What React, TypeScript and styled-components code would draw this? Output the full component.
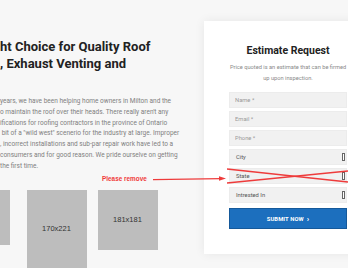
import styled, { createGlobalStyle } from "styled-components";

const GlobalStyle = createGlobalStyle`
  html, body {
    margin: 0;
    padding: 0;
    background: #f7f7f7;
    overflow: hidden;
  }
  body {
    font-family: Roboto, "Liberation Sans", Arial, sans-serif;
  }
`;

const fields = ["Name *", "Email *", "Phone *"];
const selects = ["City", "State", "Intrested In"];

const images = [
  { w: 48, h: 55, label: "" },
  { w: 60, h: 78, label: "170x221" },
  { w: 60, h: 60, label: "181x181" },
];

export default function App() {
  return (
    <>
      <GlobalStyle />
      <Page>
        <Row>
          <Intro>
            <Heading>
              ht Choice for Quality Roof
              <br />, Exhaust Venting and
            </Heading>

            <Body>
              years, we have been helping home owners in Milton and the
              <br />o maintain the roof over their heads. There really aren't any
              <br />ifications for roofing contractors in the province of Ontario
              <br />
              {"\u00a0"}bit of a "wild west" scenerio for the industry at large. Improper
              <br />, incorrect installations and sub-par repair work have led to a
              <br />
              consumers and for good reason. We pride ourselve on getting
              <br />
              the first time.
            </Body>

            <Gallery>
              {images.map((img, i) => (
                <Placeholder key={i} $w={img.w} $h={img.h}>
                  {img.label}
                </Placeholder>
              ))}
            </Gallery>
          </Intro>

          <Card>
            <CardTitle>Estimate Request</CardTitle>
            <CardText>
              Price quoted is an estimate that can be firmed
              <br />
              up upon inspection.
            </CardText>

            <Form>
              {fields.map((f) => (
                <Input key={f} placeholder={f} />
              ))}
              {selects.map((s) => (
                <Select key={s}>
                  <span>{s}</span>
                  <Spinner />
                </Select>
              ))}
              <Submit type="button">
                SUBMIT NOW <Chevron>›</Chevron>
              </Submit>
            </Form>
          </Card>
        </Row>

        {/* review markup on top of the page */}
        <Note>Please remove</Note>
        <Markup width="348" height="268" viewBox="0 0 348 268" aria-hidden>
          <line x1="153" y1="179.6" x2="221" y2="178.6" stroke="#ee3b3b" strokeWidth="1.2" />
          <polygon points="226,178.5 219,176.3 219,180.8" fill="#ee3b3b" />
          <line x1="227" y1="169" x2="348" y2="182" stroke="#ee3b3b" strokeWidth="1.3" />
          <line x1="227" y1="183" x2="348" y2="171" stroke="#ee3b3b" strokeWidth="1.3" />
        </Markup>
      </Page>
    </>
  );
}

const Page = styled.div`
  position: relative;
  width: 348px;
  height: 268px;
  overflow: hidden;
`;

const Row = styled.div`
  display: flex;
  align-items: flex-start;
  gap: 19px;
  padding-top: 21px;
`;

const Intro = styled.div`
  flex: none;
  width: 185px;
  padding-top: 17px;
`;

const Heading = styled.h1`
  margin: 0;
  font-size: 13px;
  line-height: 17px;
  font-weight: 700;
  color: #222;
  white-space: nowrap;
`;

const Body = styled.p`
  margin: 24px 0 0;
  font-size: 6.5px;
  line-height: 10.8px;
  color: #808080;
  white-space: nowrap;
`;

const Gallery = styled.div`
  margin: 18px 0 0 -50px;
  display: grid;
  grid-template-columns: repeat(3, 71px);
  justify-items: center;
  align-items: start;
`;

const Placeholder = styled.div<{ $w: number; $h: number }>`
  width: ${({ $w }) => $w}px;
  height: ${({ $h }) => $h}px;
  background: #bdbdbd;
  display: flex;
  align-items: center;
  justify-content: center;
  font-family: "Liberation Sans", Arial, sans-serif;
  font-size: 7.5px;
  color: #333;
`;

const Card = styled.div`
  flex: none;
  width: 168px;
  box-sizing: border-box;
  padding: 23px 25px 25px;
  background: #fff;
  box-shadow: 0 0 10px rgba(0, 0, 0, 0.07);
  text-align: center;
`;

const CardTitle = styled.h2`
  margin: 0;
  font-size: 10.5px;
  line-height: 14px;
  font-weight: 700;
  color: #222;
`;

const CardText = styled.p`
  margin: 3.5px 0 0;
  font-size: 5.7px;
  line-height: 11px;
  color: #8a8a8a;
  white-space: nowrap;
`;

const Form = styled.div`
  margin-top: 8.5px;
  display: flex;
  flex-direction: column;
  gap: 3px;
  text-align: left;
`;

const Input = styled.input`
  box-sizing: border-box;
  height: 16px;
  width: 100%;
  border: 1px solid #ececec;
  background: #f1f1f1;
  padding: 0 5px;
  font-family: Roboto, "Liberation Sans", sans-serif;
  font-size: 5.8px;
  color: #555;
  outline: none;

  &::placeholder {
    color: #9a9a9a;
  }
`;

const Select = styled.div`
  box-sizing: border-box;
  height: 16px;
  display: flex;
  align-items: center;
  justify-content: space-between;
  padding: 0 1px 0 6px;
  border: 1px solid #ececec;
  background: #f1f1f1;
  font-size: 5.8px;
  color: #555;
`;

const Spinner = styled.span`
  box-sizing: border-box;
  width: 3px;
  height: 8px;
  border: 1px solid #666;
  background: #fff;
`;

const Submit = styled.button`
  margin-top: 2px;
  height: 21px;
  border: 1px solid #15599a;
  background: #1c6fbe;
  color: #fff;
  font-family: Roboto, "Liberation Sans", sans-serif;
  font-size: 5.8px;
  font-weight: 700;
  letter-spacing: 0.02em;
  display: flex;
  align-items: center;
  justify-content: center;
  gap: 3px;
  padding: 0;
`;

const Chevron = styled.span`
  font-size: 8px;
  line-height: 1;
`;

const Note = styled.span`
  position: absolute;
  left: 102px;
  top: 175px;
  font-family: "Liberation Sans", Arial, sans-serif;
  font-size: 6.4px;
  font-weight: 700;
  color: #f03a3a;
  white-space: nowrap;
`;

const Markup = styled.svg`
  position: absolute;
  left: 0;
  top: 0;
  pointer-events: none;
`;
